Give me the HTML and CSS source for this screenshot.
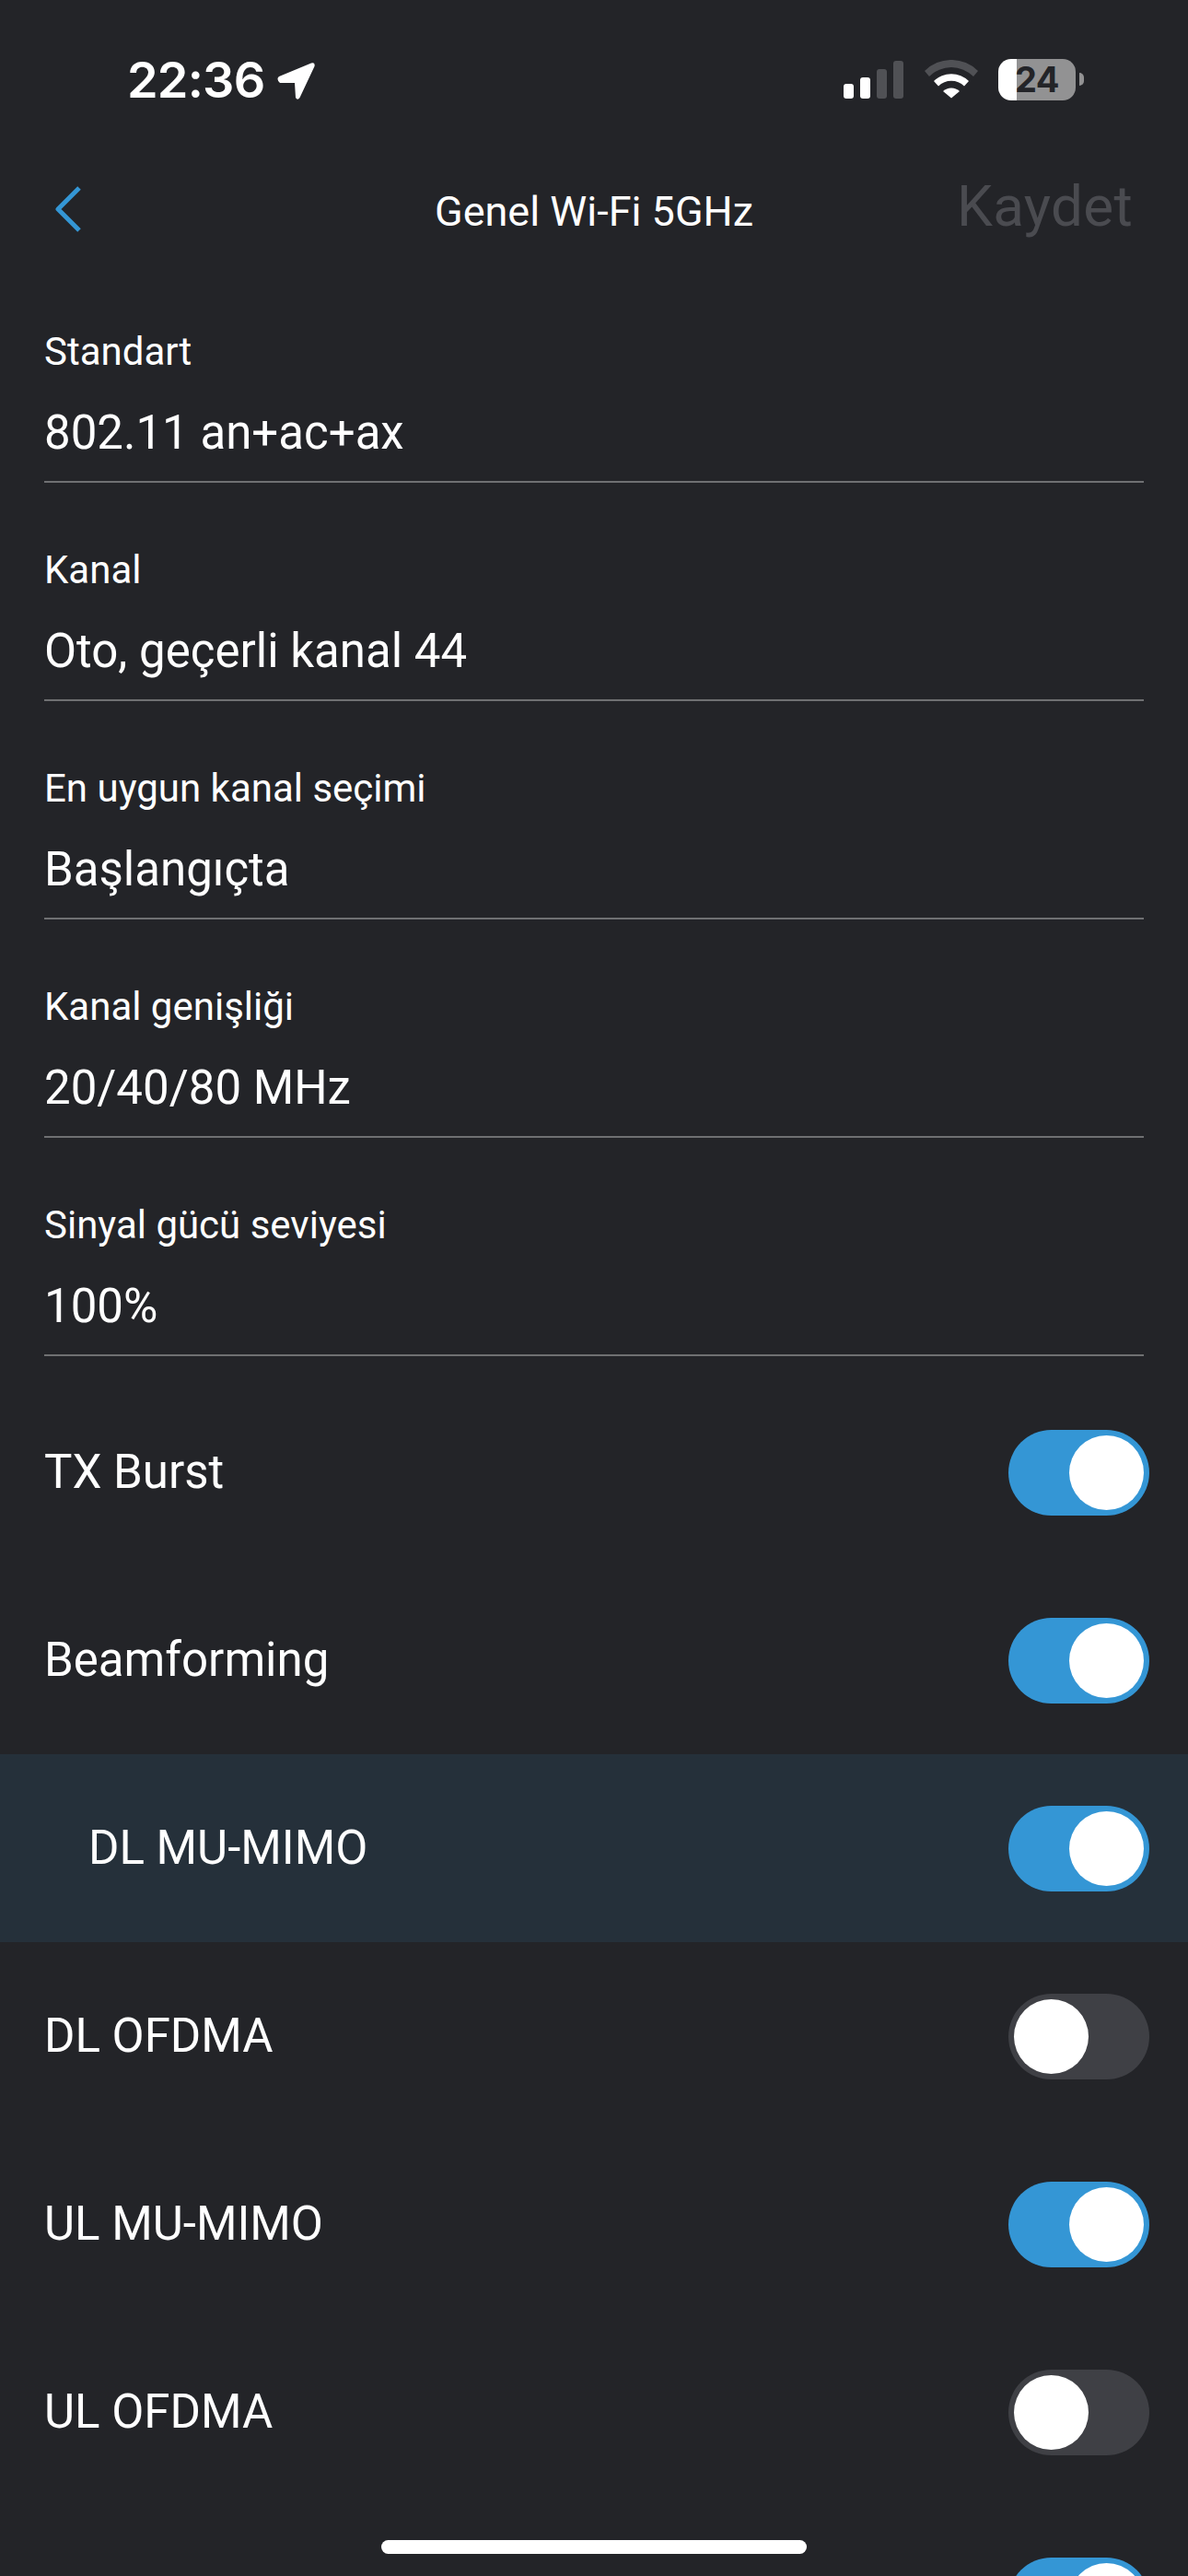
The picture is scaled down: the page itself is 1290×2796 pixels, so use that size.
FILE: index.html
```html
<!DOCTYPE html>
<html lang="tr">
<head>
<meta charset="utf-8">
<title>Genel Wi-Fi 5GHz</title>
<link rel="stylesheet" href="styles.css">
</head>
<body>
<div class="screen">
  <header class="status">
    <div class="status-left">
      <span class="time">22:36</span>
      <svg class="loc" viewBox="0 0 41 40"><path d="M2 15 L37 0.500 Q41.500 -0.500 40.500 4 L24.500 38 Q22 41.500 20 38 L19 22 L3 22 Q-1.500 18 2 15Z"/></svg>
    </div>
    <div class="status-right">
      <svg class="signal" viewBox="0 0 65 41"><rect x="0" y="25" width="11" height="16" rx="3" fill="#fff"/><rect x="18" y="18" width="11" height="23" rx="3" fill="#fff"/><rect x="36" y="9" width="11" height="32" rx="3" fill="#505155"/><rect x="54" y="0" width="11" height="41" rx="3" fill="#505155"/></svg>
      <svg class="wifi" viewBox="0 0 58 42"><path d="M0 12 A41 41 0 0 1 58 12 L53 18 A34 34 0 0 0 5 18Z" fill="#505155"/><path d="M10 23 A27 27 0 0 1 48 23 L43 28.500 A20 20 0 0 0 15 28.500Z" fill="#fff"/><path d="M20 34 A13 13 0 0 1 38 34 L29 41.500Z" fill="#fff"/></svg>
      <div class="battery"><span class="battery-num">24</span></div>
      <div class="battery-cap"></div>
    </div>
  </header>
  <nav class="navbar">
    <svg class="back" viewBox="0 0 28 50"><path d="M26 2 L3 25 L26 48" /></svg>
    <h1 class="title">Genel Wi-Fi 5GHz</h1>
    <span class="save">Kaydet</span>
  </nav>
  <section class="fields">
    <div class="field"><div class="label">Standart</div><div class="value">802.11 an+ac+ax</div></div>
    <div class="field"><div class="label">Kanal</div><div class="value">Oto, geçerli kanal 44</div></div>
    <div class="field"><div class="label">En uygun kanal seçimi</div><div class="value">Başlangıçta</div></div>
    <div class="field"><div class="label">Kanal genişliği</div><div class="value">20/40/80 MHz</div></div>
    <div class="field"><div class="label">Sinyal gücü seviyesi</div><div class="value">100%</div></div>
  </section>
  <section class="toggles">
    <div class="row"><span>TX Burst</span><div class="switch on"><i></i></div></div>
    <div class="row"><span>Beamforming</span><div class="switch on"><i></i></div></div>
    <div class="row sub"><span>DL MU-MIMO</span><div class="switch on"><i></i></div></div>
    <div class="row"><span>DL OFDMA</span><div class="switch"><i></i></div></div>
    <div class="row"><span>UL MU-MIMO</span><div class="switch on"><i></i></div></div>
    <div class="row"><span>UL OFDMA</span><div class="switch"><i></i></div></div>
    <div class="row"><span></span><div class="switch on"><i></i></div></div>
  </section>
  <div class="home"></div>
</div>
</body>
</html>
```
FILE: styles.css
```css
* { box-sizing: border-box; }
html, body { margin: 0; padding: 0; background: #232428; }
body { font-family: Roboto, "Liberation Sans", sans-serif; color: #fff; }
.screen { position: relative; width: 1290px; height: 2796px; overflow: hidden; background: #232428; }

.status { height: 172px; display: flex; justify-content: space-between; padding: 56px 0 0; }
.status-left { display: flex; align-items: flex-start; margin-left: 138px; }
.time { font: 600 54px/62px Inter, Roboto, sans-serif; letter-spacing: -0.8px; }
.loc { width: 41px; height: 40px; margin: 12px 0 0 14px; fill: #fff; }
.status-right { display: flex; align-items: flex-start; margin-right: 113px; }
.signal { width: 65px; height: 41px; margin-top: 10px; }
.wifi { width: 58px; height: 42px; margin: 9px 0 0 23px; }
.battery { width: 84px; height: 45px; margin: 8px 0 0 22px; border-radius: 14px; background: linear-gradient(90deg, #fff 0 20px, #929293 20px); display: flex; align-items: center; justify-content: center; }
.battery-num { font: 700 38px/45px Inter, Roboto, sans-serif; color: #232428; letter-spacing: -0.5px; }
.battery-cap { width: 5px; height: 14px; margin: 23px 0 0 4px; background: #929293; border-radius: 0 6px 6px 0; }

.navbar { height: 110px; display: flex; align-items: center; justify-content: space-between; position: relative; padding: 0 60px 0 60px; }
.back { width: 28px; height: 50px; fill: none; stroke: #3496d5; stroke-width: 5; stroke-linecap: butt; stroke-linejoin: round; }
.title { position: absolute; left: 0; right: 0; top: 33px; margin: 0; text-align: center; font: 400 45px/50px Roboto, sans-serif; }
.save { font: 400 62px/70px Roboto, sans-serif; color: #4a4b50; margin-bottom: 6px; letter-spacing: 0.3px; }

.fields { padding: 0 48px; margin-top: 5px; }
.field { height: 237px; padding: 71px 0 24px; border-bottom: 2px solid #6f7072; }
.label { font: 400 42px/48px Roboto, sans-serif; }
.value { font: 400 51px/56px Roboto, sans-serif; margin-top: 36px; }

.toggles { margin-top: 24px; }
.row { height: 204px; display: flex; align-items: center; justify-content: space-between; padding: 0 42px 0 48px; font: 400 51px/60px Roboto, sans-serif; }
.sub { background: #25303a; padding-left: 96px; }
.switch { width: 153px; height: 93px; border-radius: 47px; background: #3f4045; padding: 6px; display: flex; justify-content: flex-start; }
.switch.on { background: #3496d5; justify-content: flex-end; }
.switch i { display: block; width: 81px; height: 81px; border-radius: 50%; background: #fff; }

.home { position: absolute; left: 414px; top: 2757px; width: 462px; height: 15px; border-radius: 8px; background: #fff; }
```
